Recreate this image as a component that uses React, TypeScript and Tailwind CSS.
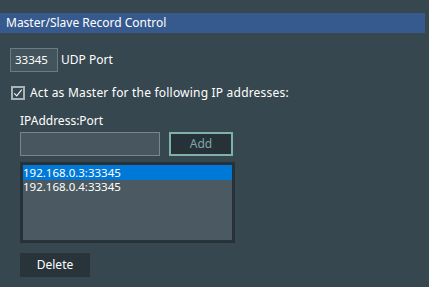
import React from "react";

export default function App() {
  const font = { fontFamily: '"Noto Sans", "Open Sans", sans-serif' };
  return (
    <div className="w-[429px] h-[287px] bg-[#37474f] overflow-hidden text-[12px] text-[#e8ecef]" style={font}>
      <div className="pt-[13px]">
        <div className="w-[425px] h-[20px] bg-[#365a8e] flex items-center pl-[6px] text-white leading-none">
          Master/Slave Record Control
        </div>
      </div>
      <div className="pl-[10px]">
        <div className="mt-[15px] flex items-center h-[24px]">
          <div className="w-[48px] h-[24px] border border-[#6c7a82] bg-[#43545c] flex items-center pl-[4px] text-white text-[11.5px]">33345</div>
          <span className="ml-[3px] text-white">UDP Port</span>
        </div>
        <div className="mt-[14px] flex items-center h-[14px]">
          <div className="ml-[1px] w-[14px] h-[14px] border-2 border-[#a9b3b8] flex items-center justify-center">
            <svg width="12" height="12" viewBox="0 0 12 12">
              <path d="M1.5 6.5 L4.5 9.5 L10.5 2" stroke="#f2f4f5" strokeWidth="1.4" fill="none" />
            </svg>
          </div>
          <span className="ml-[5px] text-white tracking-[0.2px]">Act as Master for the following IP addresses:</span>
        </div>
        <div className="pl-[10px]">
          <div className="mt-[13px] h-[16px] leading-[16px] text-white">IPAddress:Port</div>
          <div className="mt-[3px] flex items-center">
            <div className="w-[140px] h-[24px] border border-[#7a868c] bg-[#48575f]" />
            <div className="ml-[9px] w-[64px] h-[24px] border-2 border-[#7fb1aa] bg-[#263238] flex items-center justify-center text-[#7fa6a8]">Add</div>
          </div>
          <div className="mt-[6px] w-[215px] h-[81px] border-[3px] border-[#263238] bg-[#4b5a62] text-[11.5px]">
            <div className="h-[15px] bg-[#0078d7] text-white leading-[15px]">192.168.0.3:33345</div>
            <div className="h-[14px] text-white leading-[14px]">192.168.0.4:33345</div>
          </div>
          <div className="mt-[10px] w-[70px] h-[24px] bg-[#29343a] flex items-center justify-center text-white">Delete</div>
        </div>
      </div>
    </div>
  );
}
